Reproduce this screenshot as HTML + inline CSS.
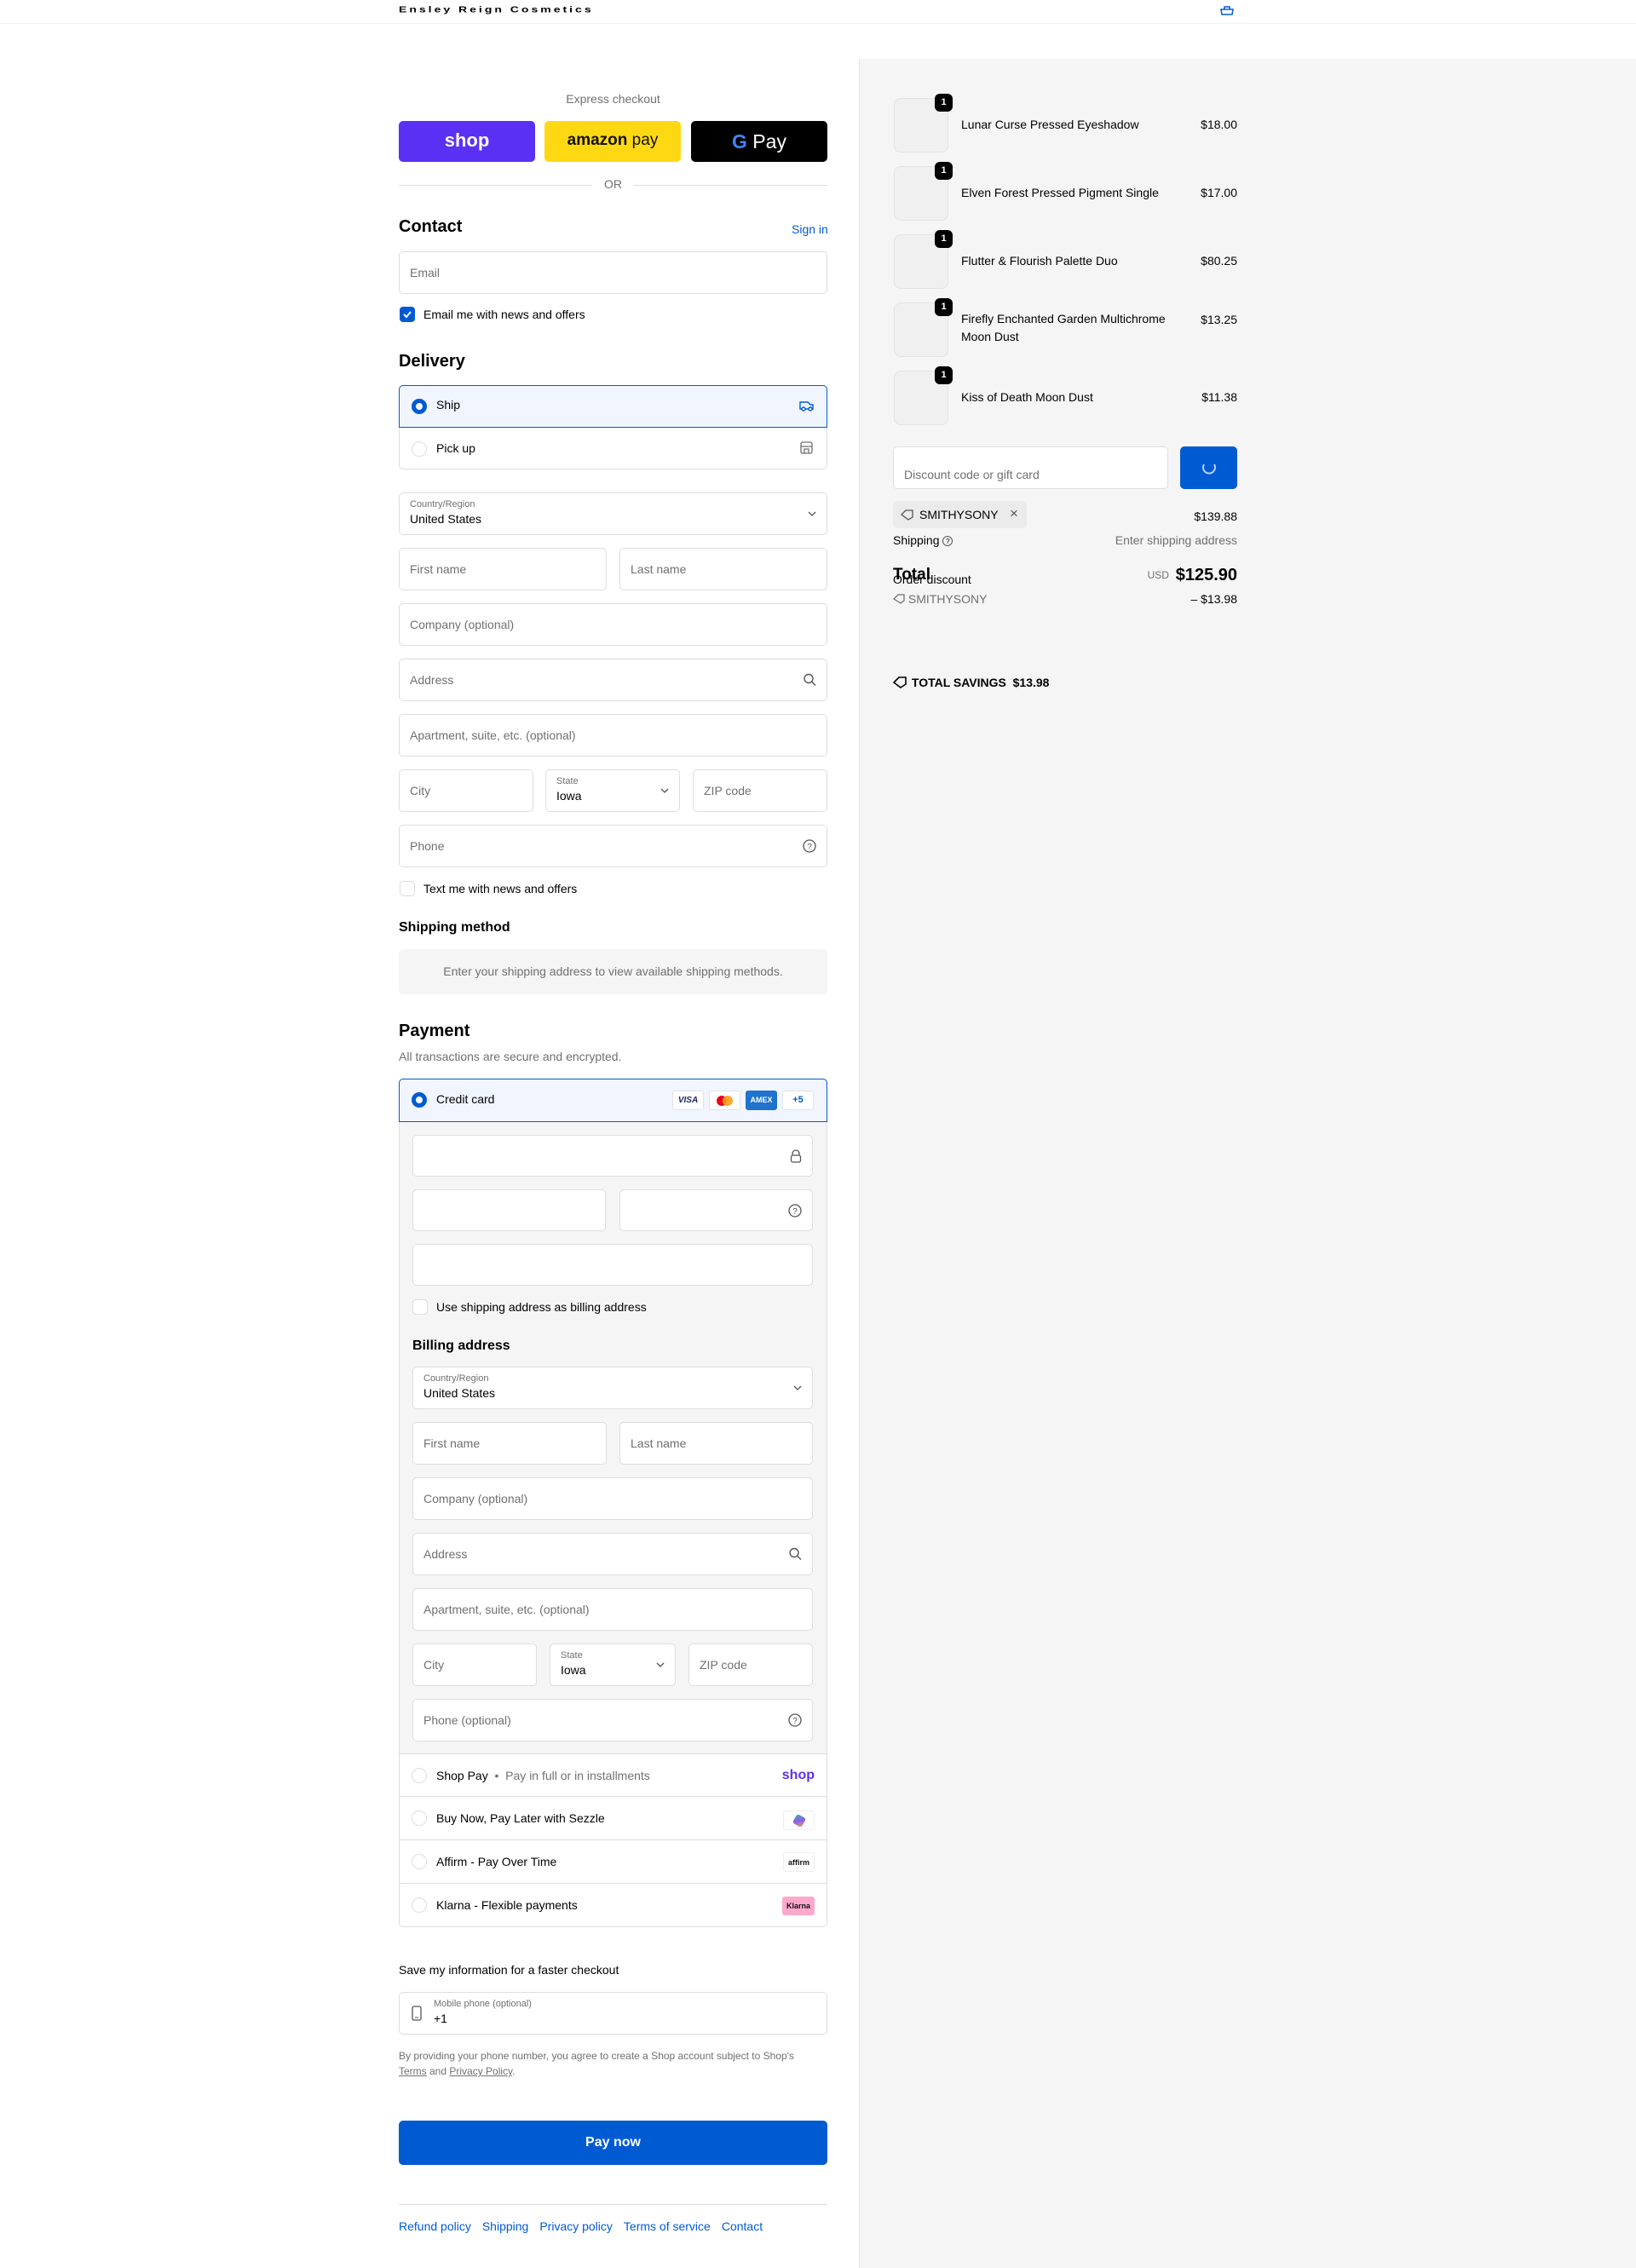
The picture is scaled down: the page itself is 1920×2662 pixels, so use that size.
<!DOCTYPE html>
<html><head><meta charset="utf-8"><style>
*{box-sizing:border-box;margin:0;padding:0}
body{width:1920px;height:2662px;position:relative;font-family:"Liberation Sans",Arial,sans-serif;font-size:14px;color:#000;background:#fff;overflow:hidden}
.a{position:absolute}
.in{position:absolute;background:#fff;border:1px solid #dedede;border-radius:5px}
.ph{position:absolute;left:12px;top:50%;transform:translateY(-50%);color:#707070;font-size:14px}
.lbl{position:absolute;left:12px;top:7px;color:#707070;font-size:11px}
.val{position:absolute;left:12px;top:22px;color:#000;font-size:14px}
.ic{position:absolute;right:12px;top:50%;transform:translateY(-50%)}
h2{position:absolute;font-size:20px;font-weight:bold}
.radio{position:absolute;width:18px;height:18px;border-radius:50%;border:1px solid #dedede;background:#fff}
.radio.on{border:5px solid #005bd3;background:#fff}
.thumb{position:absolute;left:1049px;width:64px;height:64px;border:1px solid #e3e3e3;border-radius:8px;background:#f0f0f0}
.badge{position:absolute;width:21px;height:21px;background:#000;color:#fff;font-size:11px;font-weight:bold;border-radius:6px;text-align:center;line-height:21px}
.iname{position:absolute;left:1128px;font-size:14px;line-height:21px}
.price{position:absolute;right:468px;font-size:14px}
.row{position:absolute;left:468px;width:503px;border-top:1px solid #dedede;height:51px}
.row .t{position:absolute;left:44px;top:50%;transform:translateY(-50%)}
.row .radio{left:15px;top:16px}
a{color:#005bd3}
</style></head><body>
<div class="a" style="left:468px;top:5px;font-weight:bold;font-size:14px;letter-spacing:3px;transform:scaleY(0.72);transform-origin:left top">Ensley Reign Cosmetics</div>
<svg class="a" style="left:1430px;top:6px" width="20" height="12" viewBox="0 0 20 12"><path d="M3 5h14l-1 6H4z M7 5V2h6v3" fill="none" stroke="#005bd3" stroke-width="1.5"/></svg>
<div class="a" style="left:0;top:27px;width:1920px;height:1px;background:#f2f2f2"></div>
<div class="a" style="left:1008px;top:69px;width:912px;height:2593px;background:#f5f5f5;border-left:1px solid #e3e3e3"></div>

<div class="a" style="left:468px;top:108px;width:503px;text-align:center;color:#707070;font-size:14px">Express checkout</div>
<div class="a" style="left:468px;top:142px;width:160px;height:48px;background:#5a31f4;border-radius:5px;color:#fff;font-weight:bold;font-size:22px;text-align:center;line-height:46px">shop</div>
<div class="a" style="left:639px;top:142px;width:160px;height:48px;background:#ffd814;border-radius:5px;color:#111;font-size:19px;text-align:center;line-height:46px"><b>amazon</b> pay</div>
<div class="a" style="left:811px;top:142px;width:160px;height:48px;background:#000;border-radius:5px;color:#fff;font-size:23px;text-align:center;line-height:48px"><span style="color:#4285f4;font-weight:bold">G</span> Pay</div>
<div class="a" style="left:468px;top:217px;width:227px;height:1px;background:#dedede"></div>
<div class="a" style="left:744px;top:217px;width:227px;height:1px;background:#dedede"></div>
<div class="a" style="left:695px;top:208px;width:49px;text-align:center;color:#707070">OR</div>

<h2 style="left:468px;top:255px">Contact</h2>
<a class="a" style="left:929px;top:261px;font-size:14px">Sign in</a>
<div class="in" style="left:468px;top:295px;width:503px;height:50px"><span class="ph">Email</span></div>
<div class="a" style="left:469px;top:360px;width:18px;height:18px;background:#005bd3;border-radius:4px"><svg width="18" height="18"><path d="M5 9l3 3 5-6" stroke="#fff" stroke-width="2" fill="none"/></svg></div>
<div class="a" style="left:497px;top:361px">Email me with news and offers</div>

<h2 style="left:468px;top:413px">Delivery</h2>
<div class="a" style="left:468px;top:452px;width:503px;height:99px;border:1px solid #dedede;border-radius:5px"></div>
<div class="a" style="left:468px;top:452px;width:503px;height:50px;background:#f0f5ff;border:1px solid #005bd3;border-radius:5px 5px 0 0"></div>
<div class="radio on" style="left:483px;top:468px"></div>
<div class="a" style="left:512px;top:467px">Ship</div>
<svg class="a" style="left:938px;top:468px" width="18" height="16" viewBox="0 0 18 16"><path d="M1 4h9l3 3h3v5H1z" fill="none" stroke="#005bd3" stroke-width="1.4"/><circle cx="5" cy="12" r="2" fill="#fff" stroke="#005bd3" stroke-width="1.4"/><circle cx="13" cy="12" r="2" fill="#fff" stroke="#005bd3" stroke-width="1.4"/></svg>
<div class="radio" style="left:483px;top:518px"></div>
<div class="a" style="left:512px;top:518px">Pick up</div>
<svg class="a" style="left:939px;top:518px" width="15" height="15"><rect x="1" y="1" width="13" height="13" rx="2" fill="none" stroke="#707070" stroke-width="1.3"/><path d="M1 6h13M5 14V9h5v5" fill="none" stroke="#707070" stroke-width="1.3"/></svg>

<div class="in" style="left:468px;top:578px;width:503px;height:50px"><span class="lbl">Country/Region</span><span class="val">United States</span><svg class="ic" width="10" height="6"><path d="M1 1l4 4 4-4" stroke="#555" fill="none" stroke-width="1.3"/></svg></div>
<div class="in" style="left:468px;top:643px;width:244px;height:50px"><span class="ph">First name</span></div>
<div class="in" style="left:727px;top:643px;width:244px;height:50px"><span class="ph">Last name</span></div>
<div class="in" style="left:468px;top:708px;width:503px;height:50px"><span class="ph">Company (optional)</span></div>
<div class="in" style="left:468px;top:773px;width:503px;height:50px"><span class="ph">Address</span><svg class="ic" width="15" height="15"><circle cx="6" cy="6" r="5" fill="none" stroke="#555" stroke-width="1.4"/><path d="M10 10l4 4" stroke="#555" stroke-width="1.4"/></svg></div>
<div class="in" style="left:468px;top:838px;width:503px;height:50px"><span class="ph">Apartment, suite, etc. (optional)</span></div>
<div class="in" style="left:468px;top:903px;width:158px;height:50px"><span class="ph">City</span></div>
<div class="in" style="left:640px;top:903px;width:158px;height:50px"><span class="lbl">State</span><span class="val">Iowa</span><svg class="ic" width="10" height="6"><path d="M1 1l4 4 4-4" stroke="#555" fill="none" stroke-width="1.3"/></svg></div>
<div class="in" style="left:813px;top:903px;width:158px;height:50px"><span class="ph">ZIP code</span></div>
<div class="in" style="left:468px;top:968px;width:503px;height:50px"><span class="ph">Phone</span><svg class="ic" width="16" height="16"><circle cx="8" cy="8" r="7" fill="none" stroke="#555" stroke-width="1.3"/><text x="8" y="12" font-size="10" text-anchor="middle" fill="#555" font-family="Liberation Sans">?</text></svg></div>
<div class="a" style="left:469px;top:1034px;width:18px;height:18px;border:1px solid #dedede;border-radius:4px;background:#fff"></div>
<div class="a" style="left:497px;top:1035px">Text me with news and offers</div>
<div class="a" style="left:468px;top:1080px;font-size:16px;font-weight:bold">Shipping method</div>
<div class="a" style="left:468px;top:1114px;width:503px;height:53px;background:#f5f5f5;border-radius:5px;color:#707070;text-align:center;line-height:53px">Enter your shipping address to view available shipping methods.</div>

<h2 style="left:468px;top:1199px">Payment</h2>
<div class="a" style="left:468px;top:1232px;color:#707070">All transactions are secure and encrypted.</div>
<div class="a" style="left:468px;top:1266px;width:503px;height:996px;border:1px solid #dedede;border-radius:5px"></div>
<div class="a" style="left:469px;top:1316px;width:501px;height:742px;background:#f5f5f5"></div>
<div class="a" style="left:468px;top:1266px;width:503px;height:51px;background:#f0f5ff;border:1px solid #005bd3;border-radius:5px 5px 0 0"></div>
<div class="radio on" style="left:483px;top:1282px"></div>
<div class="a" style="left:512px;top:1282px">Credit card</div>
<div class="a" style="left:789px;top:1280px;width:37px;height:23px;background:#fff;border:1px solid #e3e3e3;border-radius:3px;color:#1a1f71;font-weight:bold;font-style:italic;font-size:10px;text-align:center;line-height:21px">VISA</div>
<div class="a" style="left:832px;top:1280px;width:37px;height:23px;background:#fff;border:1px solid #e3e3e3;border-radius:3px"><span class="a" style="left:8px;top:5px;width:12px;height:12px;border-radius:50%;background:#eb001b"></span><span class="a" style="left:15px;top:5px;width:12px;height:12px;border-radius:50%;background:#f79e1b;opacity:.9"></span></div>
<div class="a" style="left:875px;top:1280px;width:37px;height:23px;background:#1f72cd;border-radius:3px;color:#fff;font-size:9px;font-weight:bold;text-align:center;line-height:23px">AMEX</div>
<div class="a" style="left:918px;top:1280px;width:37px;height:23px;background:#fff;border:1px solid #e3e3e3;border-radius:3px;color:#005bd3;font-size:11px;font-weight:bold;text-align:center;line-height:21px">+5</div>
<div class="in" style="left:484px;top:1332px;width:470px;height:49px"><svg class="ic" width="14" height="16"><path d="M3 7V5a4 4 0 018 0v2" fill="none" stroke="#555" stroke-width="1.3"/><rect x="1.5" y="7" width="11" height="8" rx="2" fill="none" stroke="#555" stroke-width="1.3"/></svg></div>
<div class="in" style="left:484px;top:1396px;width:227px;height:49px"></div>
<div class="in" style="left:727px;top:1396px;width:227px;height:49px"><svg class="ic" width="16" height="16"><circle cx="8" cy="8" r="7" fill="none" stroke="#555" stroke-width="1.3"/><text x="8" y="12" font-size="10" text-anchor="middle" fill="#555" font-family="Liberation Sans">?</text></svg></div>
<div class="in" style="left:484px;top:1460px;width:470px;height:49px"></div>
<div class="a" style="left:484px;top:1525px;width:18px;height:18px;border:1px solid #dedede;border-radius:4px;background:#fff"></div>
<div class="a" style="left:512px;top:1526px">Use shipping address as billing address</div>
<div class="a" style="left:484px;top:1571px;font-size:16px;font-weight:bold">Billing address</div>
<div class="in" style="left:484px;top:1604px;width:470px;height:50px"><span class="lbl">Country/Region</span><span class="val">United States</span><svg class="ic" width="10" height="6"><path d="M1 1l4 4 4-4" stroke="#555" fill="none" stroke-width="1.3"/></svg></div>
<div class="in" style="left:484px;top:1669px;width:228px;height:50px"><span class="ph">First name</span></div>
<div class="in" style="left:727px;top:1669px;width:227px;height:50px"><span class="ph">Last name</span></div>
<div class="in" style="left:484px;top:1734px;width:470px;height:50px"><span class="ph">Company (optional)</span></div>
<div class="in" style="left:484px;top:1799px;width:470px;height:50px"><span class="ph">Address</span><svg class="ic" width="15" height="15"><circle cx="6" cy="6" r="5" fill="none" stroke="#555" stroke-width="1.4"/><path d="M10 10l4 4" stroke="#555" stroke-width="1.4"/></svg></div>
<div class="in" style="left:484px;top:1864px;width:470px;height:50px"><span class="ph">Apartment, suite, etc. (optional)</span></div>
<div class="in" style="left:484px;top:1929px;width:146px;height:50px"><span class="ph">City</span></div>
<div class="in" style="left:645px;top:1929px;width:148px;height:50px"><span class="lbl">State</span><span class="val">Iowa</span><svg class="ic" width="10" height="6"><path d="M1 1l4 4 4-4" stroke="#555" fill="none" stroke-width="1.3"/></svg></div>
<div class="in" style="left:808px;top:1929px;width:146px;height:50px"><span class="ph">ZIP code</span></div>
<div class="in" style="left:484px;top:1994px;width:470px;height:50px"><span class="ph">Phone (optional)</span><svg class="ic" width="16" height="16"><circle cx="8" cy="8" r="7" fill="none" stroke="#555" stroke-width="1.3"/><text x="8" y="12" font-size="10" text-anchor="middle" fill="#555" font-family="Liberation Sans">?</text></svg></div>

<div class="row" style="top:2058px"><div class="radio"></div><span class="t">Shop Pay <span style="color:#707070">&nbsp;•&nbsp; Pay in full or in installments</span></span><span class="a" style="right:15px;top:16px;color:#5a31f4;font-weight:bold;font-size:16px">shop</span></div>
<div class="row" style="top:2108px"><div class="radio"></div><span class="t">Buy Now, Pay Later with Sezzle</span><span class="a" style="right:15px;top:16px;width:37px;height:23px;background:#fff;border:1px solid #eee;border-radius:3px"><span class="a" style="left:12px;top:5px;width:12px;height:12px;border-radius:3px;background:linear-gradient(135deg,#3dbb8a,#8a5cf6,#f6a13d);transform:rotate(30deg)"></span></span></div>
<div class="row" style="top:2159px"><div class="radio"></div><span class="t">Affirm - Pay Over Time</span><span class="a" style="right:15px;top:14px;width:37px;height:23px;background:#fff;border:1px solid #eee;border-radius:3px;font-size:9px;font-weight:bold;text-align:center;line-height:23px;color:#111">affirm</span></div>
<div class="row" style="top:2210px"><div class="radio"></div><span class="t">Klarna - Flexible payments</span><span class="a" style="right:15px;top:15px;width:38px;height:22px;background:#ffa8cd;border-radius:3px;font-size:9px;font-weight:bold;text-align:center;line-height:22px;color:#111">Klarna</span></div>

<div class="a" style="left:468px;top:2304px">Save my information for a faster checkout</div>
<div class="in" style="left:468px;top:2338px;width:503px;height:50px"><svg class="a" style="left:14px;top:15px" width="12" height="18"><rect x="1" y="1" width="10" height="16" rx="2" fill="none" stroke="#555" stroke-width="1.3"/><path d="M4 14h4" stroke="#555"/></svg><span class="a" style="left:40px;top:7px;font-size:11px;color:#707070">Mobile phone (optional)</span><span class="a" style="left:40px;top:22px;font-size:14px">+1</span></div>
<div class="a" style="left:468px;top:2404px;width:495px;font-size:12px;line-height:18px;color:#707070">By providing your phone number, you agree to create a Shop account subject to Shop's <u>Terms</u> and <u>Privacy Policy</u>.</div>
<div class="a" style="left:468px;top:2489px;width:503px;height:52px;background:#005bd3;border-radius:5px;color:#fff;font-weight:bold;font-size:16px;text-align:center;line-height:52px">Pay now</div>
<div class="a" style="left:468px;top:2587px;width:503px;height:1px;background:#dedede"></div>
<div class="a" style="left:468px;top:2605px;font-size:14px"><a style="margin-right:13px">Refund policy</a><a style="margin-right:13px">Shipping</a><a style="margin-right:13px">Privacy policy</a><a style="margin-right:13px">Terms of service</a><a>Contact</a></div>

<div class="thumb" style="top:115px"></div><div class="badge" style="left:1097px;top:110px">1</div><div class="iname" style="top:136px">Lunar Curse Pressed Eyeshadow</div><div class="price" style="top:138px">$18.00</div>
<div class="thumb" style="top:195px"></div><div class="badge" style="left:1097px;top:190px">1</div><div class="iname" style="top:216px">Elven Forest Pressed Pigment Single</div><div class="price" style="top:218px">$17.00</div>
<div class="thumb" style="top:275px"></div><div class="badge" style="left:1097px;top:270px">1</div><div class="iname" style="top:296px">Flutter &amp; Flourish Palette Duo</div><div class="price" style="top:298px">$80.25</div>
<div class="thumb" style="top:355px"></div><div class="badge" style="left:1097px;top:350px">1</div><div class="iname" style="top:364px;width:250px">Firefly Enchanted Garden Multichrome Moon Dust</div><div class="price" style="top:367px">$13.25</div>
<div class="thumb" style="top:435px"></div><div class="badge" style="left:1097px;top:430px">1</div><div class="iname" style="top:456px">Kiss of Death Moon Dust</div><div class="price" style="top:458px">$11.38</div>

<div class="in" style="left:1048px;top:524px;width:323px;height:50px"><span class="a" style="left:12px;top:24px;color:#707070">Discount code or gift card</span></div>
<div class="a" style="left:1385px;top:524px;width:67px;height:50px;background:#005bd3;border-radius:5px"><svg class="a" style="left:24px;top:15px" width="20" height="20"><path d="M4 6a7 7 0 1 0 12 0" fill="none" stroke="#b3cef5" stroke-width="2"/></svg></div>
<div class="a" style="left:1048px;top:588px;width:157px;height:32px;background:#ebebeb;border-radius:5px"><svg class="a" style="left:9px;top:9px" width="16" height="14"><path d="M1 7l5-5h8v8l-5 3z" fill="none" stroke="#555" stroke-width="1.3"/></svg><span class="a" style="left:31px;top:8px;font-size:14px">SMITHYSONY</span><span class="a" style="left:137px;top:5px;font-size:17px;color:#555">×</span></div>
<div class="price" style="top:598px">$139.88</div>
<div class="a" style="left:1048px;top:626px">Shipping <span style="display:inline-block;width:12px;height:12px;border:1px solid #555;border-radius:50%;font-size:8px;text-align:center;line-height:11px;vertical-align:middle">?</span></div>
<div class="price" style="top:626px;color:#707070">Enter shipping address</div>
<div class="a" style="left:1048px;top:672px">Order discount</div>
<div class="a" style="left:1048px;top:664px;font-size:19px;font-weight:bold">Total</div>
<div class="price" style="top:664px"><span style="font-size:12px;color:#707070;vertical-align:2px">USD</span>&nbsp; <b style="font-size:20px">$125.90</b></div>
<div class="a" style="left:1048px;top:695px;color:#707070"><svg width="14" height="12" style="vertical-align:-1px"><path d="M1 6l5-5h7v7l-4 3z" fill="none" stroke="#707070" stroke-width="1.3"/></svg> SMITHYSONY</div>
<div class="price" style="top:695px">– $13.98</div>
<div class="a" style="left:1048px;top:793px;font-weight:bold;font-size:14px"><svg width="18" height="14" style="vertical-align:-2px"><path d="M1 7l6-6h8v8l-6 4z" fill="none" stroke="#000" stroke-width="1.6"/></svg> TOTAL SAVINGS &nbsp;$13.98</div>
</body></html>
